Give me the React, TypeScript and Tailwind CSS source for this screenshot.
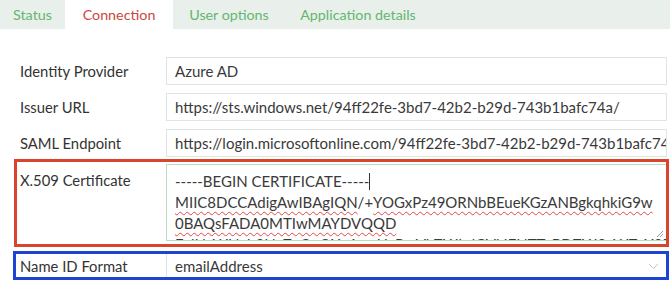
import React from "react";

const tabs = [
  { label: "Status", w: "w-[65px]", active: false },
  { label: "Connection", w: "w-[108px]", active: true },
  { label: "User options", w: "w-[112px]", active: false },
  { label: "Application details", w: "w-[146px]", active: false },
];

function Field({ label, value }: { label: string; value: string }) {
  return (
    <div className="flex items-center h-[28px]">
      <div className="w-[146px] shrink-0 text-[14.8px] text-[#333]">{label}</div>
      <div className="flex-1 h-[28px] border border-[#dfe5e2] bg-white flex items-center pl-[8px] overflow-hidden whitespace-nowrap text-[15px] text-[#3a3a3a]">
        {value}
      </div>
    </div>
  );
}

const wavy = "underline decoration-wavy decoration-[#e04a4a] decoration-1 underline-offset-[3px]";

export default function App() {
  return (
    <div className="relative w-[670px] h-[294px] bg-white overflow-hidden font-['Lato',sans-serif]">
      <div className="flex h-[29px] bg-[#e9efeb]">
        {tabs.map((t) => (
          <div
            key={t.label}
            className={`${t.w} flex items-center justify-center text-[14.3px] ${
              t.active ? "bg-white text-[#c9483d]" : "text-[#63b86b]"
            }`}
          >
            {t.label}
          </div>
        ))}
      </div>

      <div className="pl-[20px] pr-[3px] pt-[28px] flex flex-col">
        <div className="flex flex-col gap-[8px]">
          <Field label="Identity Provider" value="Azure AD" />
          <Field label="Issuer URL" value="https://sts.windows.net/94ff22fe-3bd7-42b2-b29d-743b1bafc74a/" />
          <Field label="SAML Endpoint" value="https://login.microsoftonline.com/94ff22fe-3bd7-42b2-b29d-743b1bafc74a/saml2" />
        </div>

        <div className="flex mt-[7px]">
          <div className="w-[146px] shrink-0 h-[28px] flex items-center text-[14.8px] text-[#333] mt-[2px]">
            X.509 Certificate
          </div>
          <div className="relative flex-1 h-[77px] border border-[#b9e0bc] bg-white pl-[8px] pt-[6px] overflow-hidden whitespace-nowrap text-[15px] leading-[21px] text-[#3a3a3a]">
            <div>
              -----BEGIN CERTIFICATE-----
              <span className="inline-block w-px h-[17px] bg-[#333] align-[-3px]" />
            </div>
            <div>
              <span className={wavy}>MIIC8DCCAdigAwIBAgIQN</span>/+
              <span className={wavy}>YOGxPz49ORNbBEueKGzANBgkqhkiG9w</span>
            </div>
            <div>
              <span className={wavy}>0BAQsFADA0MTIwMAYDVQQD</span>
            </div>
            <div>EylNaWNyb3NvZnQgQXp1cmUgRmVkZXJhdGVkIFNTTyBDZXJ0aWZpY2F0ZTAe</div>
            <svg className="absolute right-[2px] bottom-[2px]" width="8" height="8" viewBox="0 0 8 8">
              <path d="M7 1L1 7M7 4L4 7" stroke="#999" strokeWidth="1" />
            </svg>
          </div>
        </div>

        <div className="flex items-center h-[28px] mt-[11px]">
          <div className="w-[146px] shrink-0 text-[14.8px] text-[#333]">Name ID Format</div>
          <div className="flex-1 h-[28px] border-l border-[#dfe5e2] flex items-center justify-between pl-[8px] pr-[8px] text-[15px] text-[#3a3a3a]">
            <span>emailAddress</span>
            <svg width="11" height="7" viewBox="0 0 11 7">
              <path d="M1 1L5.5 5.5L10 1" fill="none" stroke="#b8c8c0" strokeWidth="1" />
            </svg>
          </div>
        </div>
      </div>

      <div className="absolute left-[14px] top-[159px] w-[655px] h-[88px] border-[3px] border-[#d8442c]" />
      <div className="absolute left-[13px] top-[251px] w-[656px] h-[29px] border-[3px] border-[#1d44d4]" />
    </div>
  );
}
